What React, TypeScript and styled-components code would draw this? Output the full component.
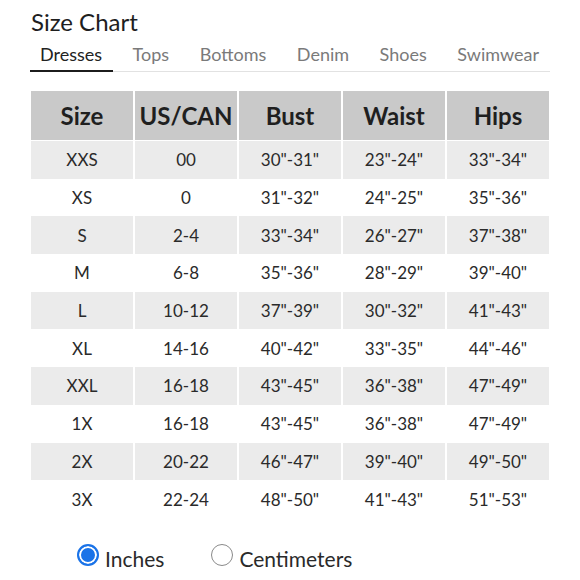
import * as React from "react";
import styled, { createGlobalStyle } from "styled-components";

const tabs = ["Dresses", "Tops", "Bottoms", "Denim", "Shoes", "Swimwear"];
const heads = ["Size", "US/CAN", "Bust", "Waist", "Hips"];
const rows = [
  ["XXS", "00", '30"-31"', '23"-24"', '33"-34"'],
  ["XS", "0", '31"-32"', '24"-25"', '35"-36"'],
  ["S", "2-4", '33"-34"', '26"-27"', '37"-38"'],
  ["M", "6-8", '35"-36"', '28"-29"', '39"-40"'],
  ["L", "10-12", '37"-39"', '30"-32"', '41"-43"'],
  ["XL", "14-16", '40"-42"', '33"-35"', '44"-46"'],
  ["XXL", "16-18", '43"-45"', '36"-38"', '47"-49"'],
  ["1X", "16-18", '43"-45"', '36"-38"', '47"-49"'],
  ["2X", "20-22", '46"-47"', '39"-40"', '49"-50"'],
  ["3X", "22-24", '48"-50"', '41"-43"', '51"-53"'],
];

function App() {
  const [unit, setUnit] = React.useState("in");
  return (
    <>
      <GlobalStyle />
      <Page>
        <Title>Size Chart</Title>
        <TabBar>
          {tabs.map((t, i) => (
            <Tab key={t} $active={i === 0}>
              {t}
            </Tab>
          ))}
        </TabBar>
        <Table>
          {heads.map((h) => (
            <HeadCell key={h}>{h}</HeadCell>
          ))}
          {rows.map((r, i) =>
            r.map((c, j) => (
              <Cell key={i + "-" + j} $shaded={i % 2 === 0}>
                {c}
              </Cell>
            ))
          )}
        </Table>
        <Units>
          <Option onClick={() => setUnit("in")}>
            <Radio $checked={unit === "in"} />
            Inches
          </Option>
          <Option onClick={() => setUnit("cm")}>
            <Radio $checked={unit === "cm"} />
            Centimeters
          </Option>
        </Units>
      </Page>
    </>
  );
}
export default App;

const GlobalStyle = createGlobalStyle`
  body {
    margin: 0;
    background: #fff;
    font-family: Lato, "Open Sans", sans-serif;
    color: #222;
  }
`;

const Page = styled.div`
  width: 580px;
  height: 580px;
  padding: 7px 30px 0 30px;
  box-sizing: border-box;
`;

const Title = styled.h1`
  margin: 0 0 0 1px;
  font-size: 24px;
  font-weight: 400;
  line-height: 29px;
  color: #1e1e1e;
`;

const TabBar = styled.div`
  display: flex;
  justify-content: space-between;
  border-bottom: 1px solid #e2e2e2;
  margin-top: 3px;
  width: 520px;
`;

const Tab = styled.div<{ $active: boolean }>`
  padding: 4px 11px 5px 10px;
  font-size: 18px;
  line-height: 22px;
  color: ${(p) => (p.$active ? "#222" : "#7a7a7a")};
  border-bottom: 2px solid ${(p) => (p.$active ? "#1c1c1c" : "transparent")};
  margin-bottom: -1px;
`;

const Table = styled.div`
  display: grid;
  grid-template-columns: repeat(5, 1fr);
  grid-template-rows: 50px repeat(10, 37.7px);
  column-gap: 2px;
  margin-top: 19px;
  margin-left: 1px;
  width: 518px;
`;

const HeadCell = styled.div`
  display: flex;
  align-items: center;
  justify-content: center;
  background: #c9c9c9;
  font-size: 24px;
  font-weight: 700;
  color: #1f1f1f;
  border-bottom: 1px solid #fff;
`;

const Cell = styled.div<{ $shaded: boolean }>`
  display: flex;
  align-items: center;
  justify-content: center;
  background: ${(p) => (p.$shaded ? "#ebebeb" : "#fff")};
  font-size: 17px;
  color: #2a2a2a;
`;

const Units = styled.div`
  display: flex;
  gap: 47px;
  margin-top: 28px;
  padding-left: 47px;
`;

const Option = styled.label`
  display: flex;
  align-items: center;
  gap: 6px;
  font-size: 21px;
  color: #2a2a2a;
  cursor: pointer;
`;

const Radio = styled.span<{ $checked: boolean }>`
  width: 22px;
  height: 22px;
  border-radius: 50%;
  box-sizing: border-box;
  border: ${(p) => (p.$checked ? "2px solid #1a73e8" : "1.5px solid #8a8a8a")};
  background: ${(p) => (p.$checked ? "#1a73e8" : "#fff")};
  box-shadow: ${(p) => (p.$checked ? "inset 0 0 0 2px #fff" : "none")};
  margin-top: -7px;
`;
